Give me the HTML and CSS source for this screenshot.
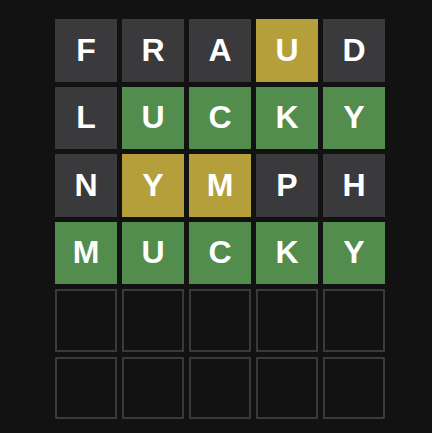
FILE: index.html
```html
<!DOCTYPE html>
<html>
<head>
<meta charset="utf-8">
<link rel="stylesheet" href="styles.css">
</head>
<body>
<div class="board">
  <div class="tile absent">F</div><div class="tile absent">R</div><div class="tile absent">A</div><div class="tile present">U</div><div class="tile absent">D</div>
  <div class="tile absent">L</div><div class="tile correct">U</div><div class="tile correct">C</div><div class="tile correct">K</div><div class="tile correct">Y</div>
  <div class="tile absent">N</div><div class="tile present">Y</div><div class="tile present">M</div><div class="tile absent">P</div><div class="tile absent">H</div>
  <div class="tile correct">M</div><div class="tile correct">U</div><div class="tile correct">C</div><div class="tile correct">K</div><div class="tile correct">Y</div>
  <div class="tile empty"></div><div class="tile empty"></div><div class="tile empty"></div><div class="tile empty"></div><div class="tile empty"></div>
  <div class="tile empty"></div><div class="tile empty"></div><div class="tile empty"></div><div class="tile empty"></div><div class="tile empty"></div>
</div>
</body>
</html>
```
FILE: styles.css
```css
html, body {
  margin: 0;
  padding: 0;
  background: #121212;
  height: 100%;
}
body {
  padding-top: 19px;
  box-sizing: border-box;
}
.board {
  width: 330px;
  height: 400px;
  margin-left: 55px;
  display: grid;
  grid-template-columns: repeat(5, 62px);
  grid-template-rows: repeat(6, 1fr);
  column-gap: 5px;
  row-gap: 5px;
}
.tile {
  display: flex;
  align-items: center;
  justify-content: center;
  font-family: "Liberation Sans", Arial, sans-serif;
  font-weight: bold;
  font-size: 32px;
  color: #ffffff;
  box-sizing: border-box;
}
.absent { background: #3a3a3c; }
.correct { background: #538d4e; }
.present { background: #b59f3b; }
.empty { border: 2px solid #3a3a3c; background: #121212; }
```
